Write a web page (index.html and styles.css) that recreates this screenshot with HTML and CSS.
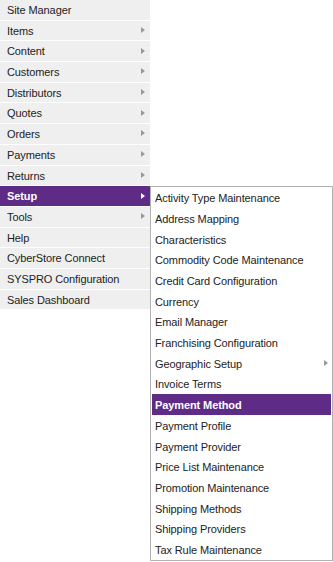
FILE: index.html
```html
<!DOCTYPE html>
<html lang="en">

<head>
    <meta charset="UTF-8">
    <meta name="viewport" content="width=device-width, initial-scale=1.0">
    <title>Menu</title>
    <link rel="stylesheet" href="styles.css">
</head>

<body>
    <div class="nav">
        <ul class="menu">
            <li class="menu-item">Site Manager</li>
            <li class="menu-item has-sub">Items</li>
            <li class="menu-item has-sub">Content</li>
            <li class="menu-item has-sub">Customers</li>
            <li class="menu-item has-sub">Distributors</li>
            <li class="menu-item has-sub">Quotes</li>
            <li class="menu-item has-sub">Orders</li>
            <li class="menu-item has-sub">Payments</li>
            <li class="menu-item has-sub">Returns</li>
            <li class="menu-item has-sub active">Setup</li>
            <li class="menu-item has-sub">Tools</li>
            <li class="menu-item">Help</li>
            <li class="menu-item">CyberStore Connect</li>
            <li class="menu-item">SYSPRO Configuration</li>
            <li class="menu-item">Sales Dashboard</li>
        </ul>

        <!-- Setup flyout -->
        <ul class="submenu">
            <li class="sub-item">Activity Type Maintenance</li>
            <li class="sub-item">Address Mapping</li>
            <li class="sub-item">Characteristics</li>
            <li class="sub-item">Commodity Code Maintenance</li>
            <li class="sub-item">Credit Card Configuration</li>
            <li class="sub-item">Currency</li>
            <li class="sub-item">Email Manager</li>
            <li class="sub-item">Franchising Configuration</li>
            <li class="sub-item has-sub">Geographic Setup</li>
            <li class="sub-item">Invoice Terms</li>
            <li class="sub-item active">Payment Method</li>
            <li class="sub-item">Payment Profile</li>
            <li class="sub-item">Payment Provider</li>
            <li class="sub-item">Price List Maintenance</li>
            <li class="sub-item">Promotion Maintenance</li>
            <li class="sub-item">Shipping Methods</li>
            <li class="sub-item">Shipping Providers</li>
            <li class="sub-item">Tax Rule Maintenance</li>
        </ul>
    </div>
</body>

</html>
```

FILE: styles.css
```css
body {
    margin: 0;
    font-family: "Liberation Sans", Arial, sans-serif;
    font-size: 11px;
    letter-spacing: -0.1px;
    color: #222;
    background: #fff;
}

ul {
    list-style: none;
    margin: 0;
    padding: 0;
}

.nav {
    display: flex;
    align-items: flex-start;
}

.menu {
    width: 150px;
    flex-shrink: 0;
}

.menu-item {
    position: relative;
    height: 18.7px;
    line-height: 19.7px;
    padding: 1px 0 0 7px;
    background-color: #efefef;
    border-bottom: 1px solid #fff;
}

.has-sub::after {
    content: "";
    position: absolute;
    top: 50%;
    margin-top: -3.5px;
    border-left: 4px solid #999;
    border-top: 3.5px solid transparent;
    border-bottom: 3.5px solid transparent;
}

.menu-item.has-sub::after {
    right: 5px;
}

.menu-item.active {
    background-color: #5e2b86;
    color: #fff;
    font-weight: bold;
}

.menu-item.active::after {
    border-left-color: #fff;
}

.submenu {
    margin-top: 186.3px;
    width: 179px;
    padding: 0 1px;
    background-color: #fff;
    border: 1px solid #b3b3b3;
}

.sub-item {
    position: relative;
    height: 19.7px;
    line-height: 20.7px;
    padding: 1px 0 0 3px;
}

.sub-item.has-sub::after {
    right: 3px;
}

.sub-item.active {
    background-color: #5e2b86;
    color: #fff;
    font-weight: bold;
}
```
